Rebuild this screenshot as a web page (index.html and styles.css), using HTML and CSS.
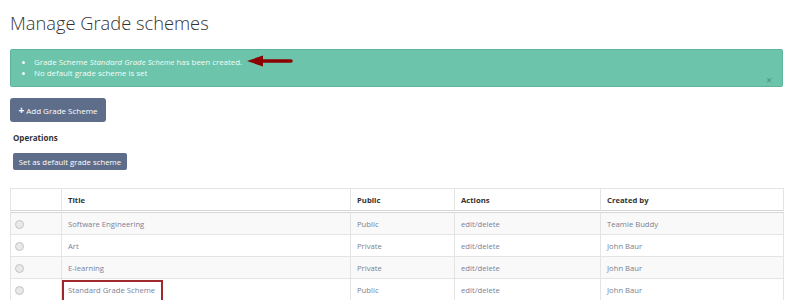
FILE: index.html
```html
<!DOCTYPE html>
<html lang="en">

<head>
  <meta charset="UTF-8">
  <meta name="viewport" content="width=device-width, initial-scale=1.0">
  <title>Manage Grade schemes</title>
  <link rel="stylesheet" href="styles.css">
</head>

<body>
  <div class="page">
    <h1>Manage Grade schemes</h1>

    <div class="alert">
      <ul>
        <li>Grade Scheme <em>Standard Grade Scheme</em> has been created.
          <svg class="arrow" width="46" height="12" viewBox="0 0 46 12">
            <path d="M14 6 H44" stroke="#8b0000" stroke-width="3.5" stroke-linecap="round" />
            <path d="M0 6 L16 0.5 L16 11.5 Z" fill="#8b0000" />
          </svg>
        </li>
        <li>No default grade scheme is set</li>
      </ul>
      <span class="close">&times;</span>
    </div>

    <button class="btn btn-add"><b>+</b> Add Grade Scheme</button>

    <div class="operations">
      <h4>Operations</h4>
      <button class="btn btn-small">Set as default grade scheme</button>
    </div>

    <table class="schemes">
      <thead>
        <tr>
          <th class="col-check"></th>
          <th class="col-title">Title</th>
          <th class="col-public">Public</th>
          <th class="col-actions">Actions</th>
          <th>Created by</th>
        </tr>
      </thead>
      <tbody>
        <tr>
          <td class="col-check"><span class="radio"></span></td>
          <td><a href="#">Software Engineering</a></td>
          <td>Public</td>
          <td><a href="#">edit/delete</a></td>
          <td>Teamie Buddy</td>
        </tr>
        <tr>
          <td class="col-check"><span class="radio"></span></td>
          <td><a href="#">Art</a></td>
          <td>Private</td>
          <td><a href="#">edit/delete</a></td>
          <td>John Baur</td>
        </tr>
        <tr>
          <td class="col-check"><span class="radio"></span></td>
          <td><a href="#">E-learning</a></td>
          <td>Private</td>
          <td><a href="#">edit/delete</a></td>
          <td>John Baur</td>
        </tr>
        <tr>
          <td class="col-check"><span class="radio"></span></td>
          <td class="highlight-cell"><a href="#">Standard Grade Scheme</a><span class="highlight"></span></td>
          <td>Public</td>
          <td><a href="#">edit/delete</a></td>
          <td>John Baur</td>
        </tr>
      </tbody>
    </table>
  </div>
</body>

</html>
```

FILE: styles.css
```css
body {
  font-family: 'Open Sans', sans-serif;
  margin: 0;
  padding: 0;
  background: #fff;
  color: #333;
  font-size: 8px;
}

.page {
  padding: 0 5px 0 10px;
}

h1 {
  font-size: 18.3px;
  font-weight: 300;
  color: #333;
  margin: 0;
  padding-top: 9px;
  line-height: 27px;
}

.alert {
  position: relative;
  margin-top: 13px;
  background: #6cc4aa;
  border: 1px solid #5db49a;
  border-radius: 2px;
  color: #f4fbf8;
  height: 36px;
}

.alert ul {
  margin: 0;
  padding: 7px 0 0 23px;
  list-style: disc;
}

.alert li {
  line-height: 11px;
  font-size: 7.9px;
}

.alert em {
  font-style: italic;
}

.arrow {
  vertical-align: middle;
  margin-left: 3px;
  margin-top: -3px;
}

.close {
  position: absolute;
  right: 10px;
  bottom: 0;
  color: #4f8f7c;
  font-size: 10px;
  line-height: 12px;
}

.btn {
  display: block;
  border: none;
  background: #5e6d8a;
  color: #fff;
  font-family: 'Open Sans', sans-serif;
  border-radius: 3px;
  cursor: pointer;
}

.btn-add {
  margin-top: 11px;
  width: 96px;
  height: 24px;
  font-size: 8px;
  padding: 0;
}

.btn-add b {
  font-size: 10px;
  line-height: 8px;
}

.operations {
  padding-left: 3px;
}

.operations h4 {
  margin: 0;
  padding-top: 10px;
  font-size: 8px;
  font-weight: 700;
  color: #333;
  line-height: 12px;
}

.btn-small {
  margin-top: 9px;
  width: 114px;
  height: 17px;
  font-size: 7.8px;
  padding: 0;
  border-radius: 2px;
}

.schemes {
  margin-top: 18px;
  width: 774px;
  border-collapse: collapse;
  border: 1px solid #e6e6e6;
  font-size: 7.7px;
}

.schemes th,
.schemes td {
  border: 1px solid #e4e4e4;
  text-align: left;
  padding: 0 6px;
  height: 21px;
}

.schemes th {
  color: #333;
  font-weight: 700;
  height: 21px;
  border-bottom: 3px double #d6d6d6;
}

.schemes td {
  color: #7b7f8f;
}

.schemes tbody tr:nth-child(odd) td {
  background: #f9f9f9;
}

.schemes a {
  color: #7b819b;
  text-decoration: none;
}

.col-check {
  width: 38px;
}

.schemes td.col-check {
  padding-left: 4px;
}

.col-title {
  width: 276px;
}

.col-public {
  width: 91px;
}

.col-actions {
  width: 133px;
}

.radio {
  display: inline-block;
  width: 7px;
  height: 7px;
  border-radius: 50%;
  border: 1px solid #c4c4c4;
  background: #e9e9e9;
  vertical-align: middle;
}

.highlight-cell {
  position: relative;
}

.highlight {
  position: absolute;
  left: 0;
  top: 1px;
  width: 97px;
  height: 18px;
  border: 2px solid #9e2a2b;
}
```
